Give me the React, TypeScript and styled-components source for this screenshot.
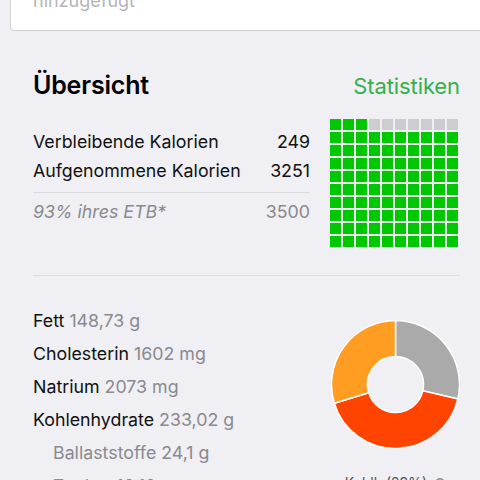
import React from "react";
import styled, { createGlobalStyle } from "styled-components";

const GlobalStyle = createGlobalStyle`
  html, body {
    margin: 0;
    padding: 0;
    background: #efeff4;
    overflow: hidden;
  }
  body {
    font-family: Inter, "Liberation Sans", Arial, sans-serif;
    color: #000;
  }
`;

const Page = styled.div`
  width: 480px;
  height: 480px;
  overflow: hidden;
`;

const SearchCard = styled.div`
  margin: -19px -10px 0 10px;
  height: 50px;
  box-sizing: border-box;
  background: #fff;
  border: 1px solid #d2d2d6;
  border-top: none;
  border-radius: 0 0 4px 4px;
  padding: 0 0 18px 22px;
  display: flex;
  align-items: flex-end;
  font-size: 18px;
  line-height: 22px;
  color: #b4b4b8;
`;

const Section = styled.section`
  padding: 0 20px 0 33px;
`;

const Header = styled.div`
  display: flex;
  justify-content: space-between;
  align-items: baseline;
  margin-top: 39px;
`;

const Title = styled.h2`
  margin: 0;
  font-size: 25px;
  line-height: 30px;
  font-weight: 600;
  letter-spacing: -0.2px;
`;

const Link = styled.a`
  font-size: 22px;
  color: #36b04a;
  letter-spacing: -0.1px;
`;

const Summary = styled.div`
  display: flex;
  align-items: flex-start;
  justify-content: space-between;
  margin-top: 19px;
`;

const SummaryRows = styled.div`
  width: 277px;
  margin-top: 8px;
`;

const Row = styled.div<{ $muted?: boolean }>`
  display: flex;
  justify-content: space-between;
  font-size: 17.8px;
  line-height: 29px;
  color: ${(p) => (p.$muted ? "#8a8a8f" : "#111")};
  font-style: ${(p) => (p.$muted ? "italic" : "normal")};
`;

const Value = styled.span`
  font-style: normal;
`;

const Rule = styled.div<{ $gap: string }>`
  height: 1px;
  background: #dcdce0;
  margin: ${(p) => p.$gap};
`;

const Waffle = styled.div`
  display: grid;
  grid-template-columns: repeat(10, 11px);
  grid-auto-rows: 11px;
  gap: 2px;
  margin-right: 2px;
`;

const Cell = styled.span<{ $on: boolean }>`
  background: ${(p) => (p.$on ? "#00c800" : "#cdcdd1")};
`;

const Nutrients = styled.div`
  display: flex;
  justify-content: space-between;
  align-items: flex-start;
`;

const NutrientList = styled.ul`
  list-style: none;
  margin: 0;
  padding: 0;
`;

const Nutrient = styled.li<{ $sub?: boolean }>`
  font-size: 17.8px;
  line-height: 33px;
  padding-left: ${(p) => (p.$sub ? "20px" : "0")};
  color: ${(p) => (p.$sub ? "#8a8a8f" : "#111")};
  white-space: nowrap;
`;

const Amount = styled.span`
  color: #8a8a8f;
`;

const ChartColumn = styled.div`
  display: flex;
  flex-direction: column;
  align-items: center;
  margin-top: 16px;
  margin-right: 0.5px;
`;

const Legend = styled.div`
  display: flex;
  align-items: center;
  gap: 8px;
  margin-top: 26px;
  font-size: 14px;
  line-height: 16px;
  color: #555;
`;

const Dot = styled.span`
  width: 10px;
  height: 10px;
  border-radius: 50%;
  background: #9a9a9e;
`;

const summary = [
  { label: "Verbleibende Kalorien", value: "249" },
  { label: "Aufgenommene Kalorien", value: "3251" },
];

const nutrients = [
  { name: "Fett", amount: "148,73 g" },
  { name: "Cholesterin", amount: "1602 mg" },
  { name: "Natrium", amount: "2073 mg" },
  { name: "Kohlenhydrate", amount: "233,02 g" },
  { name: "Ballaststoffe", amount: "24,1 g", sub: true },
  { name: "Zucker", amount: "10,10 g", sub: true },
];

const slices = [
  { from: 0, to: 103, color: "#aaaaaa" },
  { from: 103, to: 253, color: "#ff4300" },
  { from: 253, to: 360, color: "#ff9d23" },
];

const point = (r: number, deg: number) => {
  const a = ((deg - 90) * Math.PI) / 180;
  return `${(64 + r * Math.cos(a)).toFixed(2)} ${(64 + r * Math.sin(a)).toFixed(2)}`;
};

const arc = (from: number, to: number, R: number, r: number) => {
  const large = to - from > 180 ? 1 : 0;
  return [
    `M ${point(R, from)}`,
    `A ${R} ${R} 0 ${large} 1 ${point(R, to)}`,
    `L ${point(r, to)}`,
    `A ${r} ${r} 0 ${large} 0 ${point(r, from)}`,
    "Z",
  ].join(" ");
};

const Donut = () => (
  <svg width="129" height="129" viewBox="-0.5 -0.5 129 129">
    {slices.map((s) => (
      <path key={s.from} d={arc(s.from, s.to, 64, 28)} fill={s.color} stroke="#fff" strokeWidth="1.5" />
    ))}
  </svg>
);

export default function App() {
  return (
    <Page>
      <GlobalStyle />
      <SearchCard>hinzugefügt</SearchCard>
      <Section>
        <Header>
          <Title>Übersicht</Title>
          <Link>Statistiken</Link>
        </Header>
        <Summary>
          <SummaryRows>
            {summary.map((r) => (
              <Row key={r.label}>
                <span>{r.label}</span>
                <Value>{r.value}</Value>
              </Row>
            ))}
            <Rule $gap="7px 0 4px" />
            <Row $muted>
              <span>93% ihres ETB*</span>
              <Value>3500</Value>
            </Row>
          </SummaryRows>
          <Waffle>
            {Array.from({ length: 100 }, (_, i) => (
              <Cell key={i} $on={i < 3 || i >= 10} />
            ))}
          </Waffle>
        </Summary>
        <Rule $gap="28px 0 28px" />
        <Nutrients>
          <NutrientList>
            {nutrients.map((n) => (
              <Nutrient key={n.name} $sub={n.sub}>
                {n.name} <Amount>{n.amount}</Amount>
              </Nutrient>
            ))}
          </NutrientList>
          <ChartColumn>
            <Donut />
            <Legend>
              Kohlh (29%) <Dot />
            </Legend>
          </ChartColumn>
        </Nutrients>
      </Section>
    </Page>
  );
}
